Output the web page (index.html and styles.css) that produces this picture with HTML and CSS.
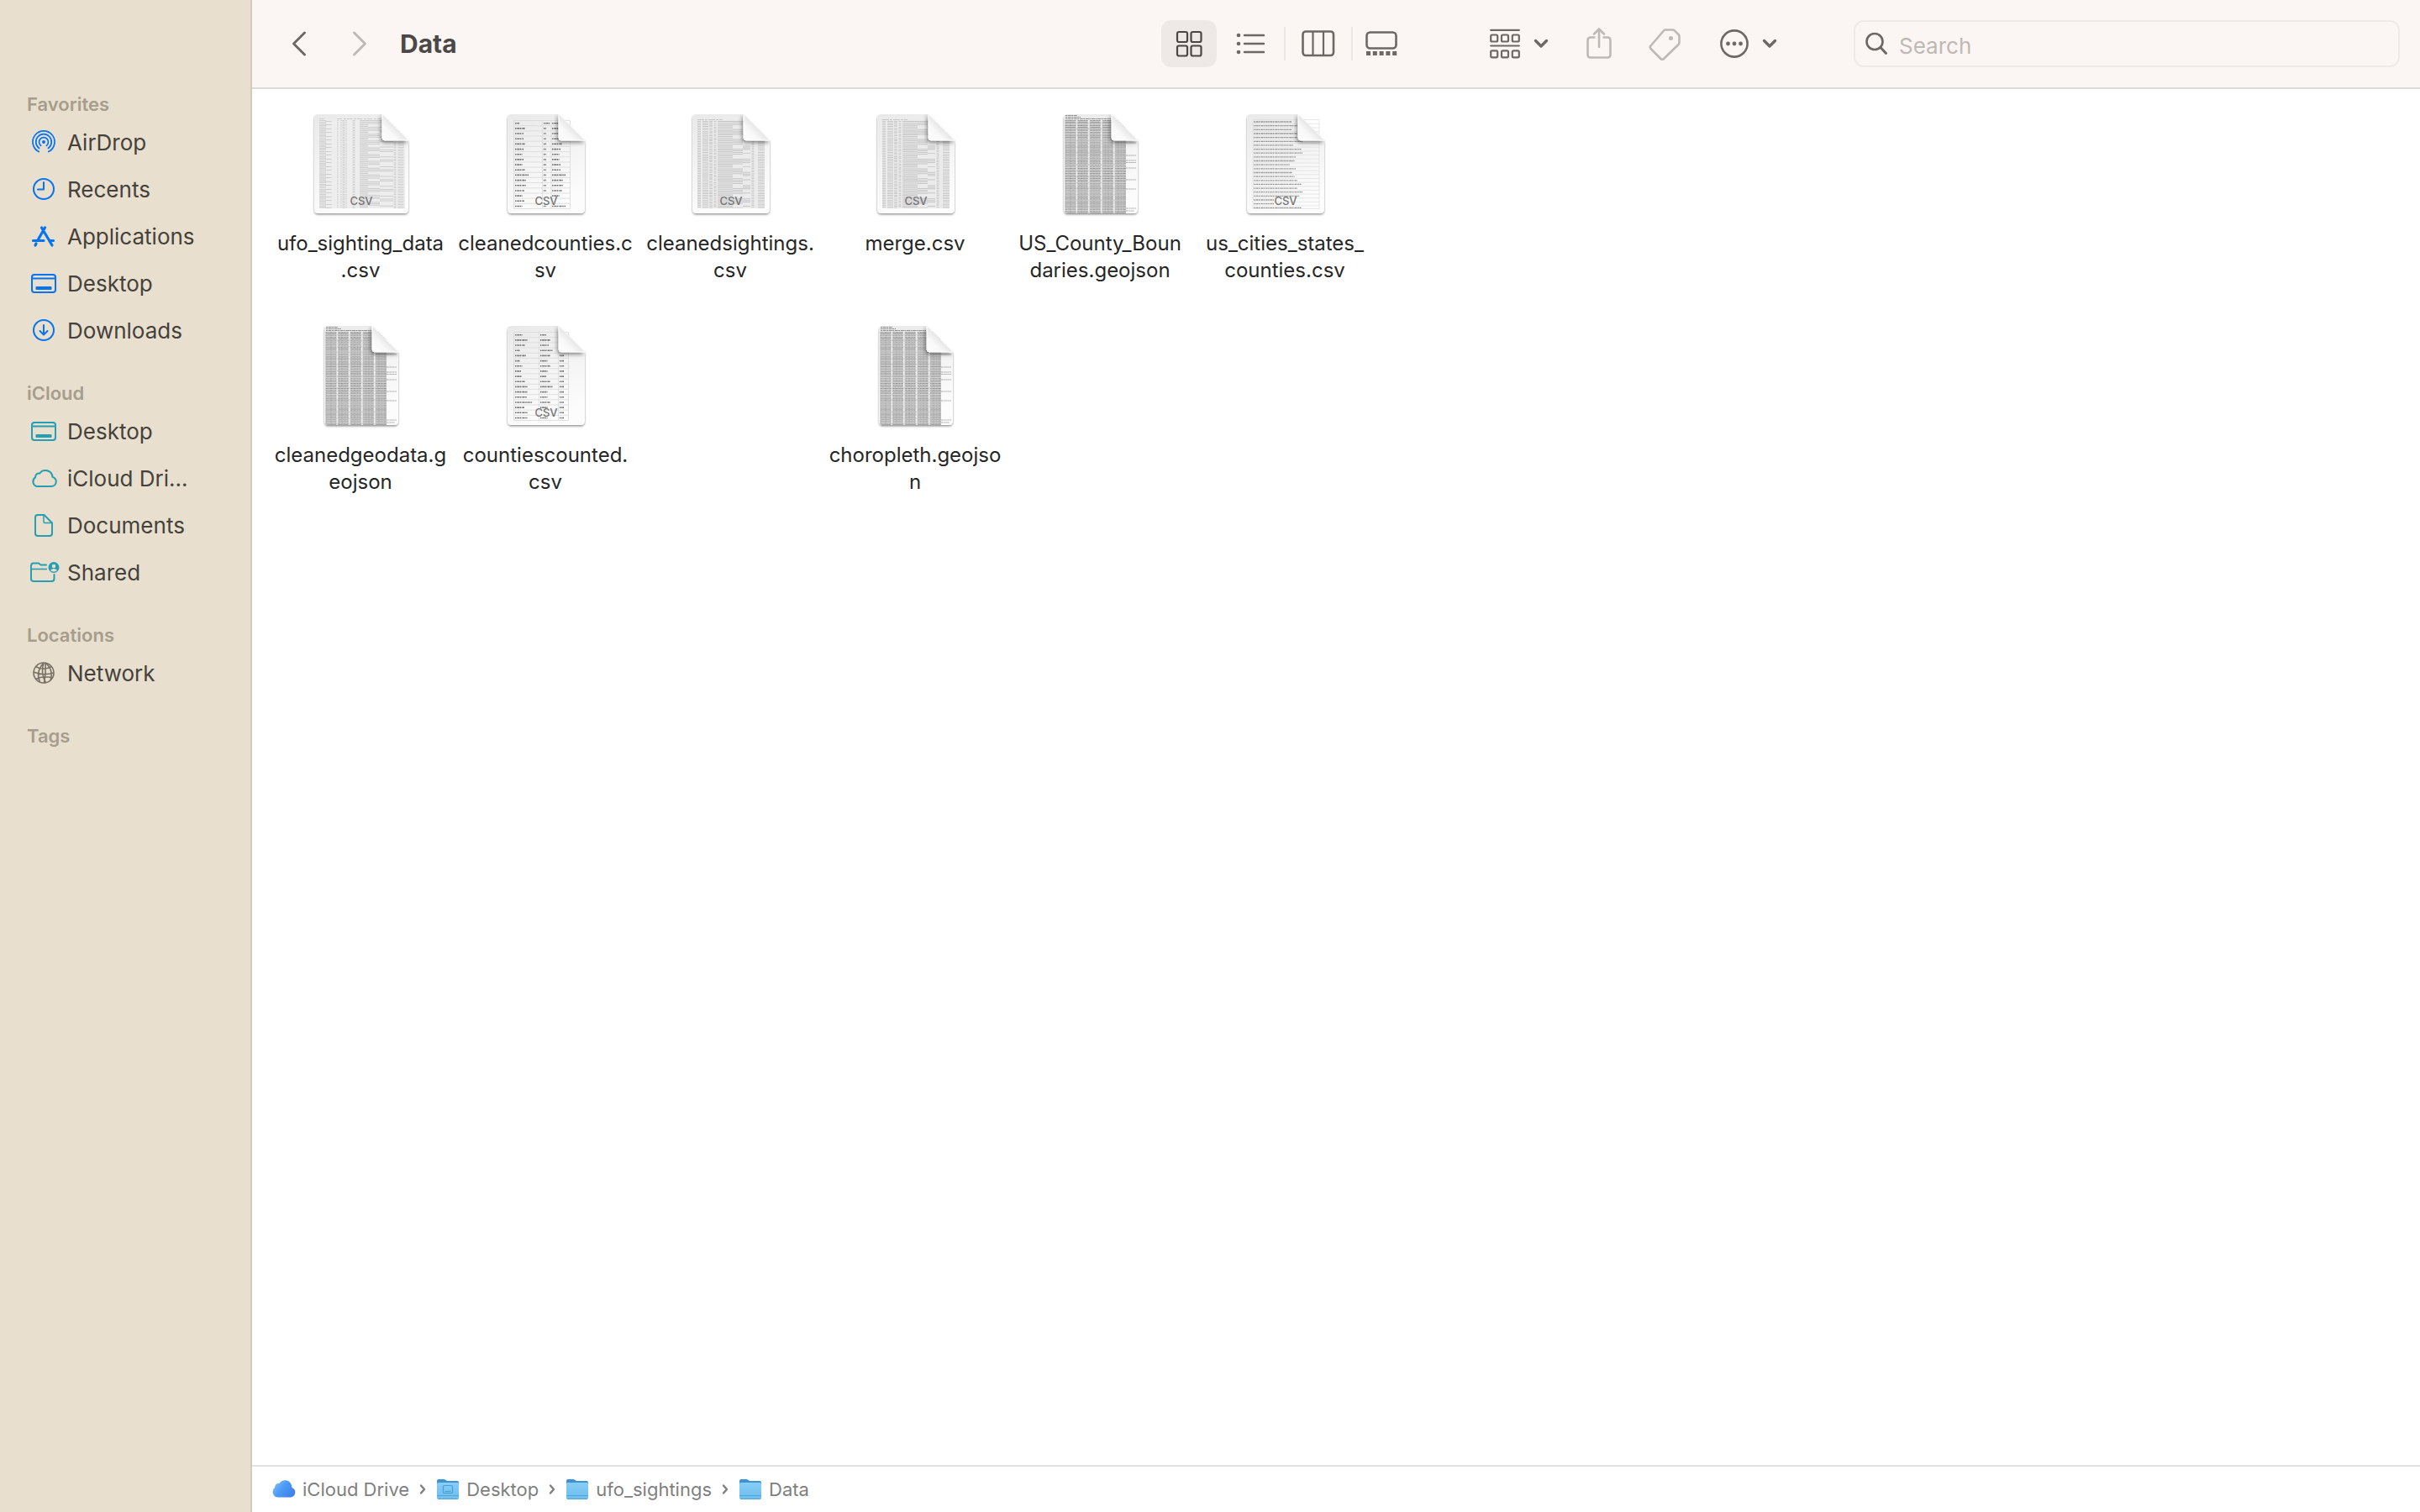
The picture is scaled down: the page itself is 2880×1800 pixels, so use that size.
FILE: index.html
```html
<!DOCTYPE html>
<html lang="en">
<head>
<meta charset="utf-8">
<title>Data</title>
<link rel="stylesheet" href="styles.css">
</head>
<body>
<!-- Shared shapes: sidebar glyphs, page outlines, thumbnails, folders -->
<svg class="defs" width="0" height="0" aria-hidden="true">
  <defs>
    <linearGradient id="paper" x1="0" y1="0" x2="0.3" y2="1"><stop offset="0" stop-color="#e9e9e9"/><stop offset="0.5" stop-color="#f3f3f3"/><stop offset="1" stop-color="#fcfcfc"/></linearGradient>
    <linearGradient id="curl" x1="0" y1="1" x2="0.6" y2="0.4"><stop offset="0" stop-color="#ffffff"/><stop offset="0.5" stop-color="#f8f8f8"/><stop offset="1" stop-color="#dedede"/></linearGradient>
    <linearGradient id="cloudfill" x1="0" y1="0" x2="1" y2="0.6"><stop offset="0" stop-color="#8fc8fb"/><stop offset="0.5" stop-color="#4d9cf6"/><stop offset="1" stop-color="#3f82f0"/></linearGradient>
    <linearGradient id="folderfill" x1="0" y1="0" x2="0" y2="1"><stop offset="0" stop-color="#86cdf6"/><stop offset="1" stop-color="#6dbdec"/></linearGradient>
    <filter id="pageshadow" x="-10%" y="-10%" width="120%" height="120%"><feDropShadow dx="0" dy="1.5" stdDeviation="1.2" flood-color="#000" flood-opacity="0.42"/></filter>
    <filter id="curlshadow" x="-40%" y="-40%" width="180%" height="180%"><feDropShadow dx="-1" dy="2" stdDeviation="2.4" flood-color="#000" flood-opacity="0.5"/></filter>
    <clipPath id="clip88"><path d="M5 0H57L88 31V113q0 5-5 5H5q-5 0-5-5V5q0-5 5-5z"/></clipPath>
    <clipPath id="clip92"><path d="M5 0H61L92 31V113q0 5-5 5H5q-5 0-5-5V5q0-5 5-5z"/></clipPath>
    <clipPath id="clip112"><path d="M5 0H81L112 31V113q0 5-5 5H5q-5 0-5-5V5q0-5 5-5z"/></clipPath>

    <symbol id="page92" viewBox="-4 0 100 126"><path fill="url(#paper)" filter="url(#pageshadow)" d="M5 0H61L92 31V113q0 5-5 5H5q-5 0-5-5V5q0-5 5-5z"/></symbol>
    <symbol id="curl92" viewBox="-4 0 100 126"><g clip-path="url(#clip92)"><path fill="url(#curl)" filter="url(#curlshadow)" stroke="#fff" stroke-width="1" d="M61 0V28q0 3 3 3H92z"/></g></symbol>

    <symbol id="geojson" viewBox="-4 0 96 126">
      <path fill="url(#paper)" filter="url(#pageshadow)" d="M5 0H57L88 31V113q0 5-5 5H5q-5 0-5-5V5q0-5 5-5z"/>
      <g clip-path="url(#clip88)" fill="none" stroke="#8e8e8e">
        <path stroke="#d6d6d6" stroke-width="73" d="M37.500 7V118"/>
        <path stroke-width="1" stroke-dasharray="2 .6 4 .5" d="M2 1.500h14M2 3.500h18M2 5.500h54"/>
        <g stroke-width="12.500" stroke-dasharray=".9 1.100 1 1.250 .8 1.050"><path d="M8 7V118M22.500 7V118M37.500 7V118M52.500 7V118M67.500 7V118"/></g>
        <g stroke="#efefef" stroke-width="1.400" stroke-dasharray="3 1.300 5 2.100 2 .8"><path d="M15.500 7V118M29.500 7V118M44.500 7V118M59.500 7V118"/></g>
        <g stroke="#d8d8d8" stroke-width=".6" stroke-dasharray="2 1"><path d="M4 7V118M6 7V118M10 7V118M12 7V118M19 7V118M23 7V118M26 7V118M34 7V118M38 7V118M41 7V118M48 7V118M51 7V118M55 7V118M63 7V118M67 7V118M70 7V118"/></g>
        <path stroke-width=".8" stroke="#999" stroke-dasharray="2 .4 1 .3" d="M74 34h12M74 49h12M74 55h12M74 57.500h12M74 64h12M74 78h12M74 89h12M74 112h12M74 115h10"/>
      </g>
      <g clip-path="url(#clip88)"><path fill="url(#curl)" filter="url(#curlshadow)" stroke="#fff" stroke-width="1" d="M57 0V28q0 3 3 3H88z"/></g>
    </symbol>

    <symbol id="sightings" viewBox="-4 0 100 126">
      <use href="#page92" x="-4" width="100" height="126"/>
      <g clip-path="url(#clip92)" fill="none" stroke="#c6c6c6">
        <path stroke="#ebebeb" stroke-width="80" d="M46 6V112"/>
        <path stroke-width="1" stroke-dasharray="8 1 3 1" d="M6 6.500h30"/>
        <path stroke-width="4" stroke-dasharray="1 1.100 1 .9" d="M8 8V112"/>
        <path stroke-width="7" stroke-dasharray="1 1 .9 1.200" d="M15.500 8V112"/>
        <path stroke-width="4" stroke-dasharray="1.200 .9 .8 1.300" d="M22 8V112"/>
        <path stroke-width="3" stroke-dasharray="1 1.500 1.100 .8" d="M27 8V112"/>
        <path stroke-width="18" stroke-dasharray="1 .7 .9 1" d="M39 8V112"/>
        <path stroke-width="12" stroke-dasharray="1 .8 1 1 1 5 1 .9" d="M54 8V112"/>
        <path stroke-width="9" stroke-dasharray="1 .8 1 4 .9 6 1 1" d="M64.500 8V112"/>
        <path stroke-width="3" stroke-dasharray="1 1.200 1 .8" d="M72 8V112"/>
        <path stroke-width="8" stroke-dasharray="1 1 .8 1.300" d="M82 8V112"/>
      </g>
      <use href="#curl92" x="-4" width="100" height="126"/>
    </symbol>

    <symbol id="desktop" viewBox="0 0 36 36"><g fill="none" stroke="currentColor" stroke-width="2"><rect x="4" y="8" width="28" height="21" rx="3"/><path d="M4 12.500H32"/></g><rect x="8.500" y="22" width="19" height="4" rx="1" fill="currentColor"/></symbol>
    <symbol id="folder" viewBox="0 0 28 26"><path fill="#3f91cf" d="M1 3q0-2 2-2h6q1.500 0 2.500 1t2.500 1H25q2 0 2 2v6H1z"/><path fill="url(#folderfill)" d="M1 6.500q0-1.500 1.500-1.500h23q1.500 0 1.500 1.500V23q0 1.500-1.500 1.500h-23Q1 24.500 1 23z"/><path stroke="#4fa6da" stroke-width="1" d="M1 20.500H27M2 24.500H26"/></symbol>
    <symbol id="more-below" viewBox="0 0 18 12"><path fill="none" stroke="currentColor" stroke-width="3.400" stroke-linecap="round" stroke-linejoin="round" d="M2.500 2.500L9 9l6.500-6.500"/></symbol>
    <symbol id="crumb-arrow" viewBox="0 0 8 14"><path fill="none" stroke="currentColor" stroke-width="2.400" stroke-linecap="round" stroke-linejoin="round" d="M2 2.500L6 7l-4 4.500"/></symbol>
  </defs>
</svg>

<div class="window">
  <nav class="sidebar" aria-label="Sidebar">
    <section class="group favorites">
      <h2>Favorites</h2>
      <ul>
        <li><a href="#airdrop"><svg viewBox="0 0 36 36"><g fill="none" stroke="currentColor" stroke-width="1.700" stroke-linecap="round"><path d="M12.200 29.600A13 13 0 1 1 23.800 29.600"/><path d="M12.600 25.500A9.300 9.300 0 1 1 23.400 25.500"/><path d="M14.600 22.400A5.500 5.500 0 1 1 21.400 22.400"/></g><circle cx="18" cy="18" r="2" fill="currentColor"/></svg>AirDrop</a></li>
        <li><a href="#recents"><svg viewBox="0 0 36 36"><g fill="none" stroke="currentColor" stroke-width="2" stroke-linecap="round" stroke-linejoin="round"><circle cx="18" cy="18" r="12"/><path d="M18 10v8.500h-7"/></g></svg>Recents</a></li>
        <li><a href="#applications"><svg viewBox="0 0 36 36"><g fill="none" stroke="currentColor" stroke-width="3.200" stroke-linecap="round"><path d="M19.500 8L11.500 22M15.500 8L28 29M5.500 23.500H18M25 23.500h4.500M9 27l-1 2"/></g></svg>Applications</a></li>
        <li><a href="#desktop-folder"><svg><use href="#desktop"/></svg>Desktop</a></li>
        <li><a href="#downloads"><svg viewBox="0 0 36 36"><g fill="none" stroke="currentColor" stroke-width="2" stroke-linecap="round" stroke-linejoin="round"><circle cx="18" cy="18" r="12"/><path d="M18 12v11M13.500 19l4.500 4.500 4.500-4.500"/></g></svg>Downloads</a></li>
      </ul>
    </section>
    <section class="group icloud">
      <h2>iCloud</h2>
      <ul>
        <li><a href="#icloud-desktop"><svg><use href="#desktop"/></svg>Desktop</a></li>
        <li><a href="#icloud-drive"><svg viewBox="0 0 36 36"><path fill="none" stroke="currentColor" stroke-width="2" stroke-linejoin="round" d="M9.500 28A6 6 0 0 1 8 17.300Q8.500 12 13 12.700A8.500 8.500 0 0 1 28.500 16.800Q33 18.500 32.800 22.500Q32.300 28 26.500 28z"/></svg>iCloud Dri...</a></li>
        <li><a href="#documents"><svg viewBox="0 0 36 36"><g fill="none" stroke="currentColor" stroke-width="2" stroke-linejoin="round"><path d="M18 6h-7q-3 0-3 3v19q0 3 3 3h14q3 0 3-3V15.500L18.500 6z"/><path stroke-width="1.500" d="M18 6v8q0 1.500 1.500 1.500H28"/></g></svg>Documents</a></li>
        <li><a href="#shared"><svg viewBox="0 0 36 36"><g fill="none" stroke="currentColor" stroke-width="2" stroke-linecap="round" stroke-linejoin="round"><path d="M21 9.500h-6.500L12 7.500H6q-3 0-3 3V26q0 3 3 3h21.500q3 0 3-3v-5"/><path stroke-width="1.600" stroke-linecap="butt" d="M3 14.500H22"/></g><circle cx="30" cy="12.500" r="6.500" fill="currentColor"/><circle cx="30" cy="11" r="2.200" fill="#e8dfcf"/><path fill="#e8dfcf" d="M26 16q4-4 8 0q-4 3-8 0z"/></svg>Shared</a></li>
      </ul>
    </section>
    <section class="group locations">
      <h2>Locations</h2>
      <ul>
        <li><a href="#network"><svg viewBox="0 0 36 36"><g fill="none" stroke="currentColor" stroke-width="1.600"><circle cx="18" cy="18" r="12"/><path d="M18 6Q8 17 13.500 29M18 6Q14 18 20.500 30M20 6.200Q21 18 18.500 30M20 6.200Q30 14 26 27M8.500 10.500Q17 16 27.500 10.500M6 17Q17 22 30 18M8.500 25.500Q17 21 28.500 24"/></g></svg>Network</a></li>
      </ul>
    </section>
    <section class="group">
      <h2>Tags</h2>
    </section>
  </nav>

  <main class="content">
    <header class="toolbar">
      <div class="heading">
        <button class="step" aria-label="Back"><svg width="20" height="32" viewBox="0 0 20 32"><path fill="none" stroke="currentColor" stroke-width="3" stroke-linecap="round" stroke-linejoin="round" d="M16.500 3L3.500 16l13 13"/></svg></button>
        <button class="step" aria-label="Forward" disabled><svg width="20" height="32" viewBox="0 0 20 32"><path fill="none" stroke="currentColor" stroke-width="3" stroke-linecap="round" stroke-linejoin="round" d="M3.500 3l13 13-13 13"/></svg></button>
        <h1>Data</h1>
      </div>
      <div class="views">
        <button class="view selected" aria-label="Icons" aria-pressed="true"><svg width="32" height="32" viewBox="0 0 32 32"><g fill="none" stroke="currentColor" stroke-width="2.200"><rect x="2" y="2" width="12" height="12" rx="2"/><rect x="18.500" y="2" width="12" height="12" rx="2"/><rect x="2" y="18.500" width="12" height="12" rx="2"/><rect x="18.500" y="18.500" width="12" height="12" rx="2"/></g></svg></button>
        <button class="view list" aria-label="List"><svg width="34" height="32" viewBox="0 0 34 32"><g fill="none" stroke="currentColor" stroke-width="2.600" stroke-linecap="round"><path d="M10 6H33M10 16H33M10 26H33"/></g><g fill="currentColor"><circle cx="3" cy="6" r="2.300"/><circle cx="3" cy="16" r="2.300"/><circle cx="3" cy="26" r="2.300"/></g></svg></button>
        <button class="view columns" aria-label="Columns"><svg width="40" height="32" viewBox="0 0 40 32"><g fill="none" stroke="currentColor" stroke-width="2.600"><rect x="1.500" y="1.500" width="36.500" height="28.500" rx="3.500"/><path stroke-width="2.200" d="M13.500 2V30M26 2V30"/></g></svg></button>
        <button class="view gallery" aria-label="Gallery"><svg width="38" height="32" viewBox="0 0 38 32"><rect x="1.500" y="2.500" width="35" height="19" rx="4" fill="none" stroke="currentColor" stroke-width="2.600"/><path stroke="currentColor" stroke-width="5" stroke-dasharray="5 2.800" d="M1 27.500H37.500"/></svg></button>
      </div>
      <div class="actions">
        <button class="action" aria-label="Group"><svg width="36" height="36" viewBox="0 0 36 36"><g fill="none" stroke="currentColor" stroke-width="2.200" stroke-linecap="round"><path d="M1.200 1.800H34.800M1.200 20.500H34.800"/><rect x="1.200" y="7.500" width="8" height="8" rx="1.500"/><rect x="14" y="7.500" width="8" height="8" rx="1.500"/><rect x="26.800" y="7.500" width="8" height="8" rx="1.500"/><rect x="1.200" y="26.300" width="8" height="8" rx="1.500"/><rect x="14" y="26.300" width="8" height="8" rx="1.500"/><rect x="26.800" y="26.300" width="8" height="8" rx="1.500"/></g></svg><svg width="18" height="12"><use href="#more-below"/></svg></button>
        <button class="action share" aria-label="Share" disabled><svg width="30" height="40" viewBox="0 0 30 40"><g fill="none" stroke="currentColor" stroke-width="2.600" stroke-linecap="round" stroke-linejoin="round"><path stroke-linecap="butt" d="M10.500 12.500H5q-3.500 0-3.500 3.500V33q0 3.500 3.500 3.500H25q3.500 0 3.500-3.500V16q0-3.500-3.500-3.500H19.500"/><path d="M15 24V2.500M9 8.500l6-6 6 6"/></g></svg></button>
        <button class="action tag" aria-label="Tags" disabled><svg width="38" height="40" viewBox="0 0 38 40"><path fill="none" stroke="currentColor" stroke-width="2.600" stroke-linejoin="round" d="M19.500 3.500H29q1 0 1.800.8L35.500 9q1 1 1 2v8q0 1-1 2L18 38q-1.800 1.600-3.500 0L2.500 26q-1.500-2 0-3.500L18 4.500q.7-1 1.500-1z"/><circle cx="26.500" cy="13.500" r="2.500" fill="currentColor"/></svg></button>
        <button class="action" aria-label="More"><svg width="34" height="36" viewBox="0 0 34 36"><circle cx="17" cy="18" r="15.600" fill="none" stroke="currentColor" stroke-width="2.600"/><g fill="currentColor"><circle cx="9.500" cy="18" r="2.400"/><circle cx="17" cy="18" r="2.400"/><circle cx="24.500" cy="18" r="2.400"/></g></svg><svg width="18" height="12"><use href="#more-below"/></svg></button>
      </div>
      <label class="search">
        <svg width="26" height="28" viewBox="0 0 26 28"><g fill="none" stroke="currentColor" stroke-width="2.600" stroke-linecap="round"><circle cx="11" cy="11.500" r="9.500"/><path stroke-width="3" d="M18 18.500l6.500 7"/></g></svg>
        <input type="search" aria-label="Search" placeholder="Search">
      </label>
    </header>

    <ul class="files">
      <li class="file">
        <svg width="120" height="126" viewBox="-4 0 120 126">
          <path fill="url(#paper)" filter="url(#pageshadow)" d="M5 0H81L112 31V113q0 5-5 5H5q-5 0-5-5V5q0-5 5-5z"/>
          <g clip-path="url(#clip112)" fill="none" stroke="#cdcdcd">
            <path stroke="#ededed" stroke-width="102" d="M57 6V112"/>
            <path stroke-width="1" stroke-dasharray="6 2 3 1" d="M6 5.500h8M27 5.500h52"/>
            <path stroke-width="8" stroke-dasharray="1 .9 1.200 .8" d="M10 7V112"/>
            <path stroke-width="7" stroke-dasharray="1 2.900 1 4.100" d="M17 8V112"/>
            <path stroke-width="1.500" stroke-dasharray="1 1 1 1.400" d="M28 7V112M32 7V112M38 7V112"/>
            <path stroke-width="3" stroke-dasharray="1.200 .8 .8 1.200" d="M35 7V112M47 7V112"/>
            <path stroke-width="10" stroke-dasharray="1 .7 1 .8" d="M59 7V112"/>
            <path stroke-width="14" stroke-dasharray="1 .8 1 .8 1 3.500" d="M71 7V112"/>
            <path stroke-width="16" stroke-dasharray="1 .8 1 5.300 1 2.600" d="M86 7V112"/>
            <path stroke-width="3" stroke-dasharray="1 1.200 1 .8" d="M96 7V112"/>
            <path stroke-width="7" stroke-dasharray="1 1 .8 1.200" d="M103 7V112"/>
          </g>
          <text class="kind" x="56" y="108">CSV</text>
          <g clip-path="url(#clip112)"><path fill="url(#curl)" filter="url(#curlshadow)" stroke="#fff" d="M81 0V28q0 3 3 3H112z"/></g>
        </svg>
        <span class="name">ufo_sighting_data<br>.csv</span>
      </li>
      <li class="file">
        <svg width="100" height="126" viewBox="-4 0 100 126">
          <use href="#page92" x="-4" width="100" height="126"/>
          <path fill="none" stroke="#d9d9d9" stroke-width=".8" d="M7.500 7.500h67v105h-67zM41.500 7.500v105M52 7.500v105M7.500 13.700h67M7.500 19.900h67M7.500 26h67M7.500 32.200h67M7.500 38.400h67M7.500 44.600h67M7.500 50.700h67M7.500 56.900h67M7.500 63.100h67M7.500 69.300h67M7.500 75.400h67M7.500 81.600h67M7.500 87.800h67M7.500 94h67M7.500 100.100h67M7.500 106.300h67"/>
          <g class="words">
            <path d="M9 10.700h5M9 16.900h12M9 23h10M9 29.200h10M9 35.400h12M9 41.600h10M9 47.700h9M9 53.900h10M9 60.100h9M9 66.300h12M9 72.400h16M9 78.600h13M9 84.800h13M9 91h11M9 97.100h9M9 103.300h11M9 109.500h9"/>
            <path d="M43 10.700h7M43 16.900h3M43 23h3M43 29.200h3M43 35.400h3M43 41.600h3M43 47.700h3M43 53.900h3M43 60.100h3M43 66.300h3M43 72.400h3M43 78.600h3M43 84.800h3M43 91h3M43 109.500h3"/>
            <path d="M53 10.700h8M53 16.900h8M53 23h10M53 29.200h10M53 35.400h12M53 41.600h10M53 47.700h9M53 53.900h9M53 60.100h10M53 66.300h10M53 72.400h16M53 78.600h13M53 84.800h13M53 91h12M53 97.100h9M53 109.500h16"/>
          </g>
          <text class="kind" x="46" y="108">CSV</text>
          <use href="#curl92" x="-4" width="100" height="126"/>
        </svg>
        <span class="name">cleanedcounties.c<br>sv</span>
      </li>
      <li class="file">
        <svg width="100" height="126" viewBox="-4 0 100 126"><use href="#sightings" x="-4" width="100" height="126"/><text class="kind" x="46" y="108">CSV</text></svg>
        <span class="name">cleanedsightings.<br>csv</span>
      </li>
      <li class="file">
        <svg width="100" height="126" viewBox="-4 0 100 126"><use href="#sightings" x="-4" width="100" height="126"/><text class="kind" x="46" y="108">CSV</text></svg>
        <span class="name">merge.csv</span>
      </li>
      <li class="file">
        <svg width="96" height="126"><use href="#geojson"/></svg>
        <span class="name">US_County_Boun<br>daries.geojson</span>
      </li>
      <li class="file">
        <svg width="100" height="126" viewBox="-4 0 100 126">
          <use href="#page92" x="-4" width="100" height="126"/>
          <path fill="none" stroke="#dedede" stroke-width=".7" d="M7 6.500h79v106H7zM7 11.300h79M7 16h79M7 20.600h79M7 25.300h79M7 30h79M7 34.600h79M7 39.300h79M7 43.900h79M7 48.600h79M7 53.200h79M7 57.900h79M7 62.500h79M7 67.200h79M7 71.800h79M7 76.500h79M7 81.100h79M7 85.800h79M7 90.400h79M7 95.100h79M7 99.700h79M7 104.400h79M7 109h79"/>
          <path class="words small" d="M8 9h45M8 13.700h52M8 18.300h45M8 23h52M8 27.600h52M8 32.300h58M8 36.900h47M8 41.600h57M8 46.200h58M8 50.900h50M8 55.500h49M8 60.200h43M8 64.800h50M8 69.500h46M8 74.100h49M8 78.800h52M8 83.400h57M8 88.100h52M8 92.700h58M8 97.400h54M8 102h24M8 106.700h24M8 111.400h57"/>
          <text class="kind" x="46" y="108">CSV</text>
          <use href="#curl92" x="-4" width="100" height="126"/>
        </svg>
        <span class="name">us_cities_states_<br>counties.csv</span>
      </li>
      <li class="file">
        <svg width="96" height="126"><use href="#geojson"/></svg>
        <span class="name">cleanedgeodata.g<br>eojson</span>
      </li>
      <li class="file">
        <svg width="100" height="126" viewBox="-4 0 100 126">
          <use href="#page92" x="-4" width="100" height="126"/>
          <path fill="none" stroke="#d9d9d9" stroke-width=".8" d="M7.500 7.500h65v105h-65zM37.500 7.500v105M60.500 7.500v105M7.500 13.700h65M7.500 19.900h65M7.500 26h65M7.500 32.200h65M7.500 38.400h65M7.500 44.600h65M7.500 50.700h65M7.500 56.900h65M7.500 63.100h65M7.500 69.300h65M7.500 75.400h65M7.500 81.600h65M7.500 87.800h65M7.500 94h65M7.500 100.100h65M7.500 106.300h65"/>
          <g class="words">
            <path d="M9 10.700h9M9 16.900h15M9 23h12M9 29.200h6M9 35.400h13M9 41.600h6M9 47.700h9M9 53.900h7M9 60.100h8M9 66.300h12M9 72.400h15M9 78.600h15M9 84.800h14M9 91h20M9 97.100h11M9 103.300h15M9 109.500h15"/>
            <path d="M39 10.700h7M39 16.900h12M39 23h10M39 29.200h15M39 35.400h12M39 41.600h9M39 47.700h12M39 53.900h9M39 60.100h7M39 66.300h12M39 72.400h15M39 78.600h9M39 84.800h9M39 91h12M39 97.100h9M39 109.500h9"/>
            <path d="M62 35.400h5M62 41.600h5M62 47.700h5M62 53.900h5M62 60.100h5M62 66.300h5M62 72.400h5M62 78.600h5M62 84.800h5M62 91h5M62 97.100h5M62 103.300h5M62 109.500h5"/>
          </g>
          <text class="kind" x="46" y="108">CSV</text>
          <use href="#curl92" x="-4" width="100" height="126"/>
        </svg>
        <span class="name">countiescounted.<br>csv</span>
      </li>
      <li class="file after-gap">
        <svg width="96" height="126"><use href="#geojson"/></svg>
        <span class="name">choropleth.geojso<br>n</span>
      </li>
    </ul>

    <footer class="pathbar">
      <a href="#icloud-drive"><svg width="28" height="26" viewBox="0 0 28 26"><path fill="url(#cloudfill)" d="M7 25.500A6.500 6.500 0 0 1 3 14Q3.500 8.500 8.500 9A8 8 0 0 1 22.500 10Q23.500 12 23.500 14A6 6 0 0 1 22 25.500z" transform="translate(0 -3)"/></svg>iCloud Drive</a>
      <svg class="arrow" width="8" height="14"><use href="#crumb-arrow"/></svg>
      <a href="#desktop-folder"><svg width="28" height="26" viewBox="0 0 28 26"><use href="#folder" width="28" height="26"/><g fill="none" stroke="#4b9fd3" stroke-width="1.200"><rect x="8.500" y="8.500" width="11" height="9" rx="1"/><path d="M10.500 15.500h7"/></g></svg>Desktop</a>
      <svg class="arrow" width="8" height="14"><use href="#crumb-arrow"/></svg>
      <a href="#ufo-sightings"><svg width="28" height="26"><use href="#folder"/></svg>ufo_sightings</a>
      <svg class="arrow" width="8" height="14"><use href="#crumb-arrow"/></svg>
      <a href="#data"><svg width="28" height="26"><use href="#folder"/></svg>Data</a>
    </footer>
  </main>
</div>
</body>
</html>
```
FILE: styles.css
```css
* {
  box-sizing: border-box;
}

body {
  margin: 0;
  background: #fff;
  color: #262626;
  font-family: Inter, "Liberation Sans", sans-serif;
  font-size: 24px;
}

ul {
  list-style: none;
  margin: 0;
  padding: 0;
}

a {
  color: inherit;
  text-decoration: none;
}

button {
  border: 0;
  padding: 0;
  background: none;
  color: inherit;
  font: inherit;
}

svg {
  display: block;
  flex: none;
}

.defs {
  position: absolute;
}

.window {
  display: flex;
  min-height: 100vh;
}

/* Sidebar */
.sidebar {
  flex: none;
  display: flex;
  flex-direction: column;
  gap: 30px;
  width: 300px;
  padding: 107px 0 0 32px;
  background: #e8dfcf;
  border-right: 2px solid #d3cabb;
}

.group h2 {
  margin: 0;
  color: #a69d8c;
  font-size: 22px;
  font-weight: 600;
  line-height: 34px;
}

.group a {
  display: flex;
  align-items: center;
  gap: 10px;
  height: 56px;
  padding-left: 2px;
  color: #45413b;
  font-size: 26px;
  white-space: nowrap;
}

.group svg {
  width: 36px;
  height: 36px;
  overflow: visible;
}

.favorites svg {
  color: #0673f2;
}

.icloud svg {
  color: #259fb3;
}

.locations svg {
  color: #777165;
}

/* Toolbar */
.content {
  flex: 1;
  min-width: 0;
  display: flex;
  flex-direction: column;
}

.toolbar {
  display: flex;
  align-items: center;
  height: 106px;
  padding-right: 24px;
  background: #fbf6f3;
  border-bottom: 2px solid #dcdad9;
  color: #6e6865;
}

.heading {
  flex: 1;
  display: flex;
  align-items: center;
  padding-left: 20px;
}

.heading h1 {
  margin: 0 0 0 12px;
  color: #4b4947;
  font-size: 30px;
  font-weight: 700;
  line-height: 36px;
}

.step {
  display: flex;
  justify-content: center;
  width: 72px;
}

button:disabled {
  color: #bfb9b5;
}

.views {
  display: flex;
  align-items: center;
  margin-right: 80px;
}

.view {
  display: flex;
  align-items: center;
  justify-content: center;
  width: 66px;
  height: 56px;
}

.view.selected {
  border-radius: 12px;
  background: #eee9e6;
  color: #4a4644;
}

.view.list,
.view.columns {
  width: 82px;
  height: 40px;
  border-right: 2px solid #ebe6e3;
}

.view.columns {
  width: 80px;
}

.view.gallery {
  width: 68px;
}

.actions {
  display: flex;
  align-items: center;
  gap: 18px;
  margin-right: 76px;
}

.action {
  display: flex;
  align-items: center;
  justify-content: center;
  gap: 16px;
  height: 56px;
  padding: 0 15px;
}

.action.share {
  width: 54px;
  padding: 0;
}

.action.tag {
  width: 66px;
  padding: 0;
}

.search {
  flex: 0 1 650px;
  display: flex;
  align-items: center;
  gap: 14px;
  height: 56px;
  padding: 0 12px;
  border: 2px solid #efeae7;
  border-radius: 12px;
}

.search input {
  flex: 1;
  min-width: 0;
  border: 0;
  padding: 4px 0 0;
  outline: 0;
  background: none;
  color: #4b4947;
  font: inherit;
  font-size: 26px;
}

.search input::placeholder {
  color: #bfb9b5;
}

/* Files */
.files {
  flex: 1;
  display: grid;
  grid-template-columns: repeat(auto-fill, 220px);
  grid-auto-rows: 252px;
  align-content: start;
  padding: 30px 20px;
}

.file {
  display: flex;
  flex-direction: column;
  align-items: center;
  gap: 12px;
}

.file.after-gap {
  grid-column: 4;
}

/* The first row holds six files; the second starts a new line */
.file:nth-child(7) {
  grid-column: 1;
}

.name {
  padding-right: 2px;
  font-size: 24px;
  line-height: 32px;
  text-align: center;
  white-space: nowrap;
}

.kind {
  fill: #757575;
  font-size: 13px;
  font-weight: 500;
  text-anchor: middle;
}

.words {
  fill: none;
  stroke: #6a6a6a;
  stroke-width: 1.6;
  stroke-dasharray: 1.3 0.6 0.9 0.5 1.8 0.6;
}

.words.small {
  stroke: #8a8a8a;
  stroke-width: 1.3;
}

/* Path bar */
.pathbar {
  display: flex;
  align-items: center;
  gap: 12px;
  height: 56px;
  padding: 0 24px;
  border-top: 2px solid #e2e2e2;
  color: #7f7f7f;
  font-size: 22px;
}

.pathbar a {
  display: flex;
  align-items: center;
  gap: 8px;
}
```
